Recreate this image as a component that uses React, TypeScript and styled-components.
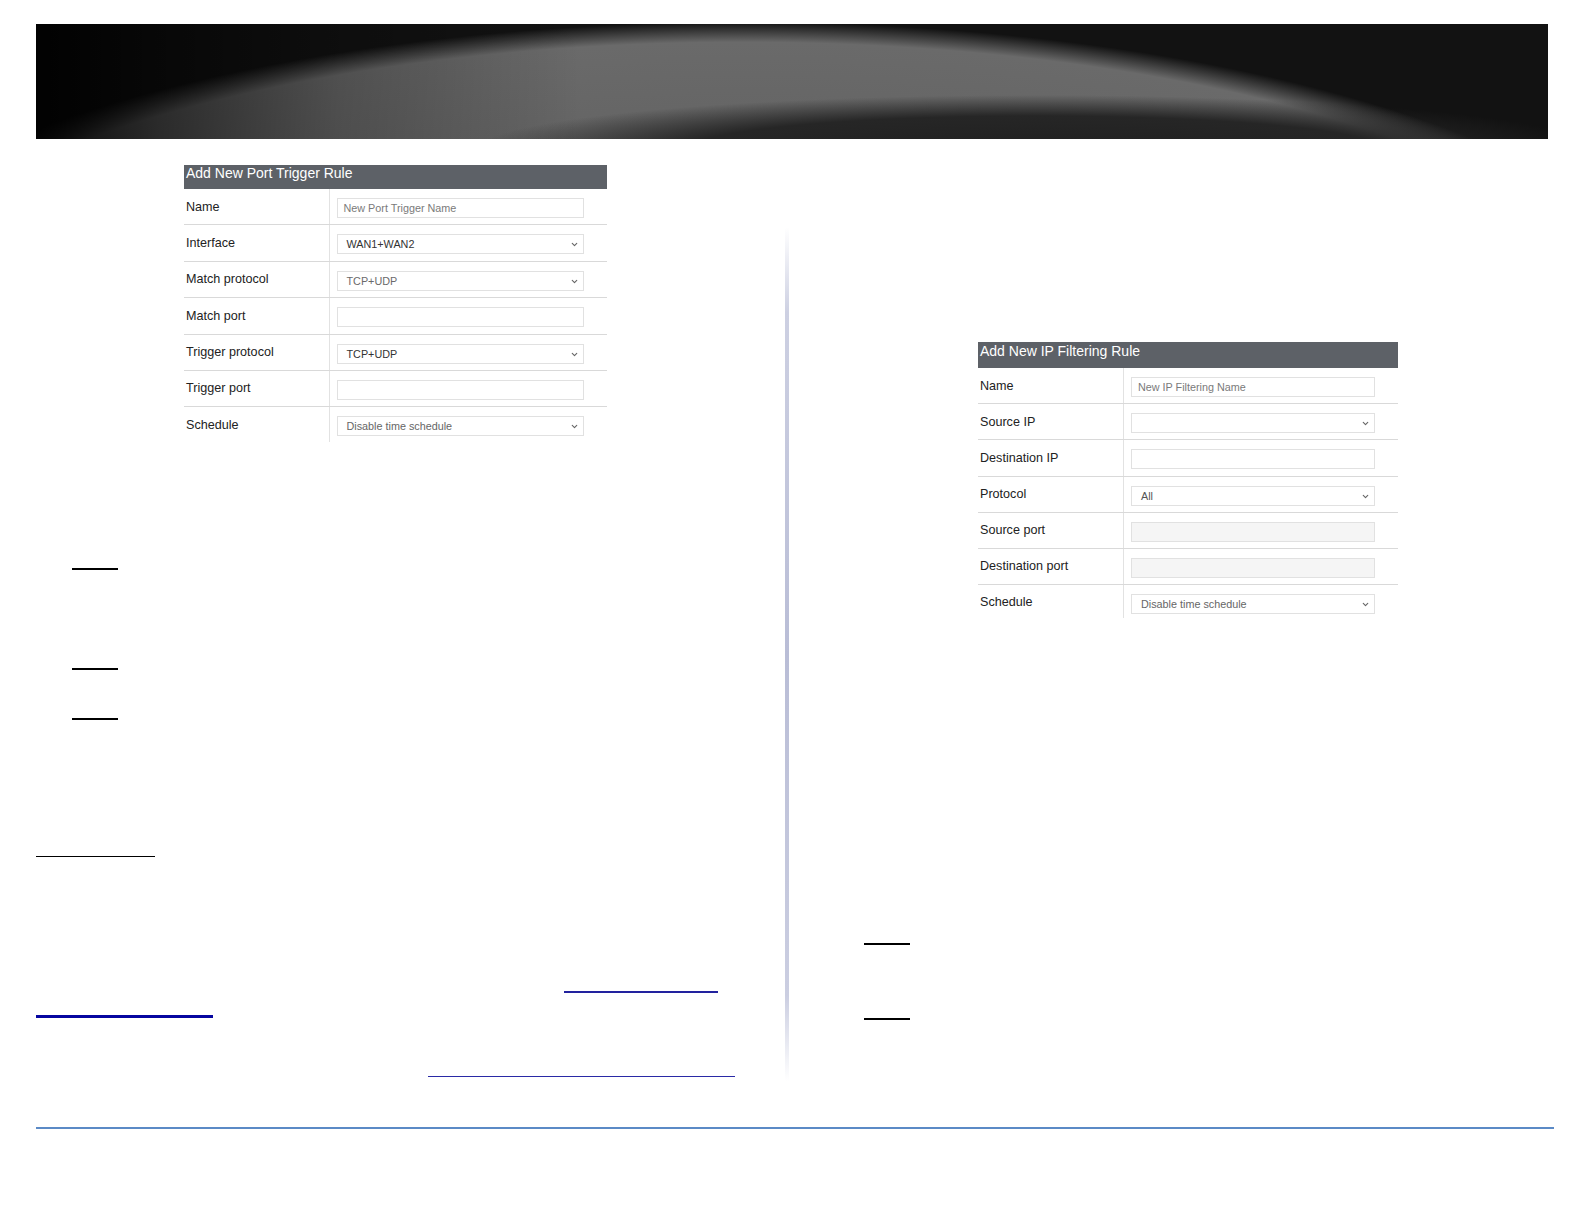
import React from 'react';
import styled, { createGlobalStyle } from 'styled-components';
import { ChevronDown } from 'lucide-react';

const GlobalStyle = createGlobalStyle`
  html, body {
    margin: 0;
    padding: 0;
    background: #ffffff;
  }
  body {
    font-family: "Liberation Sans", Arial, sans-serif;
  }
`;

const Page = styled.div`
  width: 1584px;
  height: 1224px;
  padding-top: 24px;
  box-sizing: border-box;
  display: flex;
  flex-direction: column;
  overflow: hidden;
`;

const Banner = styled.div`
  margin-left: 36px;
  width: 1512px;
  height: 115px;
  flex-shrink: 0;
  background:
    linear-gradient(90deg, rgba(0, 0, 0, 0.92) 0%, rgba(0, 0, 0, 0.6) 8%, rgba(0, 0, 0, 0.25) 20%, rgba(0, 0, 0, 0) 36%),
    radial-gradient(ellipse 560px 55px at 1000px 126px, #202020 0%, #262626 62%, rgba(38, 38, 38, 0) 100%),
    radial-gradient(ellipse 965px 336px at 706px 334px, #4c4c4c 20%, #626262 55%, #6a6a6a 94%, #121212 100%),
    #0b0b0b;
`;

const Columns = styled.div`
  margin-left: 36px;
  height: 988px;
  display: grid;
  grid-template-columns: 749px 4px 1fr;
`;

const Column = styled.div`
  display: flex;
  flex-direction: column;
  align-items: flex-start;
`;

const Divider = styled.div`
  margin-top: 88px;
  height: 854px;
  width: 4px;
  background: linear-gradient(
    to bottom,
    rgba(200, 203, 222, 0) 0%,
    #cdd0e2 10%,
    #b9bdd6 50%,
    #cbcee1 90%,
    rgba(200, 203, 222, 0) 100%
  );
`;

const Table = styled.div<{ $width: number; $left: number; $top: number }>`
  width: ${(p) => p.$width}px;
  margin-left: ${(p) => p.$left}px;
  margin-top: ${(p) => p.$top}px;
  display: flex;
  flex-direction: column;
`;

const TableHeader = styled.div<{ $height: number }>`
  height: ${(p) => p.$height}px;
  background: #5d6167;
  color: #ffffff;
  font-size: 14px;
  line-height: ${(p) => p.$height - 7}px;
  padding-left: 2px;
  white-space: nowrap;
`;

const Row = styled.div<{ $height: number; $last?: boolean }>`
  height: ${(p) => p.$height}px;
  box-sizing: border-box;
  display: grid;
  grid-template-columns: 145.5px 1fr;
  border-bottom: ${(p) => (p.$last ? 'none' : '1px solid #d9d9d9')};
`;

const Label = styled.div`
  border-right: 1px solid #e2e2e2;
  font-size: 12.6px;
  color: #222222;
  padding: 10.5px 0 0 2px;
  line-height: 14px;
  white-space: nowrap;
`;

const Field = styled.div<{ $pad: number }>`
  padding: 9px 0 0 ${(p) => p.$pad}px;
`;

const Box = styled.div<{ $width: number; $disabled?: boolean }>`
  position: relative;
  width: ${(p) => p.$width}px;
  height: 20px;
  box-sizing: border-box;
  border: 1px solid #e1e1e1;
  background: ${(p) => (p.$disabled ? '#f5f5f5' : '#ffffff')};
  display: flex;
  align-items: center;
`;

const BoxText = styled.span<{ $tone: string; $pad: number }>`
  font-size: 10.8px;
  color: ${(p) => p.$tone};
  padding-left: ${(p) => p.$pad}px;
  white-space: nowrap;
`;

const Chevron = styled.span`
  position: absolute;
  right: 4px;
  top: 5px;
  display: flex;
  color: #666666;
`;

const Rule = styled.div<{ $left: number; $top: number; $width: number; $thick: number; $color: string }>`
  margin-left: ${(p) => p.$left}px;
  margin-top: ${(p) => p.$top}px;
  width: ${(p) => p.$width}px;
  height: ${(p) => p.$thick}px;
  background: ${(p) => p.$color};
  flex-shrink: 0;
`;

const FooterRule = styled.div`
  margin-left: 36px;
  width: 1518px;
  height: 2px;
  background: #5b8ac6;
  flex-shrink: 0;
`;

type FieldDef = {
  label: string;
  kind: 'input' | 'select';
  text?: string;
  tone?: string;
  disabled?: boolean;
};

const portTrigger: FieldDef[] = [
  { label: 'Name', kind: 'input', text: 'New Port Trigger Name', tone: '#7a7a7a' },
  { label: 'Interface', kind: 'select', text: 'WAN1+WAN2', tone: '#333333' },
  { label: 'Match protocol', kind: 'select', text: 'TCP+UDP', tone: '#6a6a6a' },
  { label: 'Match port', kind: 'input' },
  { label: 'Trigger protocol', kind: 'select', text: 'TCP+UDP', tone: '#333333' },
  { label: 'Trigger port', kind: 'input' },
  { label: 'Schedule', kind: 'select', text: 'Disable time schedule', tone: '#666666' },
];

const ipFiltering: FieldDef[] = [
  { label: 'Name', kind: 'input', text: 'New IP Filtering Name', tone: '#7a7a7a' },
  { label: 'Source IP', kind: 'select' },
  { label: 'Destination IP', kind: 'input' },
  { label: 'Protocol', kind: 'select', text: 'All', tone: '#555555' },
  { label: 'Source port', kind: 'input', disabled: true },
  { label: 'Destination port', kind: 'input', disabled: true },
  { label: 'Schedule', kind: 'select', text: 'Disable time schedule', tone: '#666666' },
];

type RuleTableProps = {
  title: string;
  fields: FieldDef[];
  width: number;
  left: number;
  top: number;
  headerHeight: number;
  rowHeight: number;
  lastHeight: number;
  fieldPad: number;
  boxWidth: number;
};

const RuleTable = ({
  title,
  fields,
  width,
  left,
  top,
  headerHeight,
  rowHeight,
  lastHeight,
  fieldPad,
  boxWidth,
}: RuleTableProps) => (
  <Table $width={width} $left={left} $top={top}>
    <TableHeader $height={headerHeight}>{title}</TableHeader>
    {fields.map((f, i) => {
      const last = i === fields.length - 1;
      return (
        <Row key={f.label} $height={last ? lastHeight : rowHeight} $last={last}>
          <Label>{f.label}</Label>
          <Field $pad={fieldPad}>
            <Box $width={boxWidth} $disabled={f.disabled}>
              {f.text && (
                <BoxText $tone={f.tone || '#333'} $pad={f.kind === 'input' ? 6 : 9}>
                  {f.text}
                </BoxText>
              )}
              {f.kind === 'select' && (
                <Chevron>
                  <ChevronDown size={9} strokeWidth={3} />
                </Chevron>
              )}
            </Box>
          </Field>
        </Row>
      );
    })}
  </Table>
);

export default function App() {
  return (
    <>
      <GlobalStyle />
      <Page>
        <Banner />
        <Columns>
          <Column>
            <RuleTable
              title="Add New Port Trigger Rule"
              fields={portTrigger}
              width={423}
              left={148}
              top={26}
              headerHeight={24}
              rowHeight={36.4}
              lastHeight={34.4}
              fieldPad={7}
              boxWidth={247.5}
            />
            <Rule $left={36} $top={126} $width={46} $thick={2} $color="#000" />
            <Rule $left={36} $top={98} $width={46} $thick={2} $color="#000" />
            <Rule $left={36} $top={48.5} $width={46} $thick={2} $color="#000" />
            <Rule $left={0} $top={135.5} $width={119} $thick={1} $color="#000" />
            <Rule $left={528} $top={134} $width={154} $thick={2} $color="#22229e" />
            <Rule $left={0} $top={22.6} $width={177} $thick={3} $color="#0606a0" />
            <Rule $left={391.5} $top={57.4} $width={307} $thick={1} $color="#2a2aa6" />
          </Column>
          <Divider />
          <Column>
            <RuleTable
              title="Add New IP Filtering Rule"
              fields={ipFiltering}
              width={419.5}
              left={189}
              top={203}
              headerHeight={26.3}
              rowHeight={36.1}
              lastHeight={33.5}
              fieldPad={7.5}
              boxWidth={243.5}
            />
            <Rule $left={75} $top={325} $width={46} $thick={2} $color="#000" />
            <Rule $left={75} $top={72.6} $width={46} $thick={2} $color="#000" />
          </Column>
        </Columns>
        <FooterRule />
      </Page>
    </>
  );
}
